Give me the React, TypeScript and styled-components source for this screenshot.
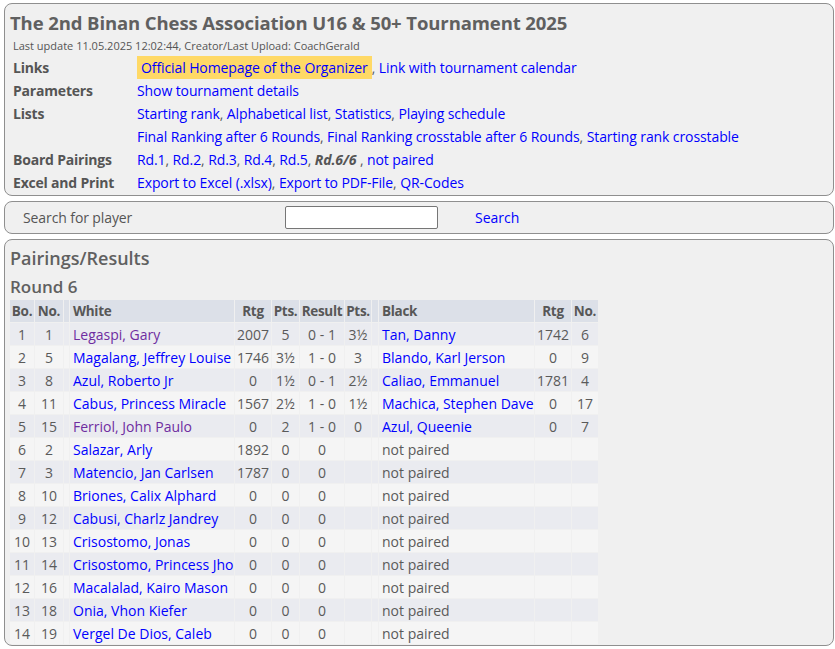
import styled, { createGlobalStyle } from "styled-components";

const GlobalStyle = createGlobalStyle`
  body {
    margin: 0;
    background: #fff;
    font-family: "Open Sans", "Liberation Sans", sans-serif;
    font-size: 14px;
    color: #5a5a5a;
  }
  a {
    color: #0000ff;
    text-decoration: none;
  }
`;

const Page = styled.div`
  display: flex;
  flex-direction: column;
  gap: 5px;
  padding: 3px 1px 3px 4px;
`;

const Panel = styled.div`
  background: #f0f0f0;
  border: 1px solid #8f8f8f;
  border-radius: 8px;
  padding: 4px 5px 4px 5px;
`;

const InfoPanel = styled(Panel)`
  padding: 5px 5px 1px 5px;
`;

const ResultsPanel = styled(Panel)`
  padding: 4px 5px 0 5px;
`;

const Title = styled.h1`
  margin: 0;
  font-size: 18.5px;
  font-weight: 700;
  color: #606060;
  line-height: 27px;
  letter-spacing: -0.1px;
`;

const Updated = styled.div`
  font-size: 11px;
  line-height: 14px;
  margin: 3px 0 3px 3px;
  color: #555;
`;

const InfoGrid = styled.div`
  display: grid;
  grid-template-columns: 124px auto;
  grid-auto-rows: 23px;
  align-items: center;
  padding-left: 3px;
`;

const Label = styled.div`
  font-weight: 700;
  color: #555;
  letter-spacing: -0.2px;
`;

const Value = styled.div`
  white-space: nowrap;
  letter-spacing: -0.1px;
`;

const Highlight = styled.a`
  display: inline-block;
  background: #ffd966;
  padding: 0 4px;
  line-height: 23px;
`;

const Current = styled.b`
  font-style: italic;
  color: #555;
`;

const SearchPanel = styled(Panel)`
  display: grid;
  grid-template-columns: 262px 153px auto;
  align-items: center;
  padding: 3px 5px 4px 18px;
  height: 24px;
`;

const SearchLabel = styled.span`
  color: #555;
  letter-spacing: -0.1px;
`;

const SearchInput = styled.input`
  height: 23px;
  box-sizing: border-box;
  border: 1px solid #767676;
  border-radius: 2px;
  background: #fff;
  margin: 0;
`;

const SearchLink = styled.a`
  margin-left: 37px;
`;

const Heading = styled.h2`
  margin: 0;
  font-size: 18px;
  font-weight: 600;
  color: #606060;
  line-height: 28px;
`;

const SubHeading = styled.h3`
  margin: 2px 0 0 0;
  font-size: 17px;
  font-weight: 600;
  color: #606060;
  line-height: 25px;
`;

const Table = styled.table`
  border-collapse: separate;
  border-spacing: 1px;
  margin-left: -1px;
  width: 590px;
  table-layout: fixed;
  white-space: nowrap;
`;

const Th = styled.th<{ $w: number; $left?: boolean }>`
  width: ${(p) => p.$w}px;
  background: #dce0e8;
  color: #575757;
  font-weight: 700;
  font-size: 13.5px;
  letter-spacing: -0.3px;
  text-align: ${(p) => (p.$left ? "left" : "center")};
  padding: 0 0 0 ${(p) => (p.$left ? 3 : 0)}px;
  height: 22px;
  box-sizing: border-box;
  overflow: hidden;
`;

const Tr = styled.tr<{ $odd: boolean }>`
  background: ${(p) => (p.$odd ? "#eaebf0" : "#f5f5f5")};
`;

const Td = styled.td<{ $left?: boolean }>`
  text-align: ${(p) => (p.$left ? "left" : "center")};
  padding: 0 0 0 ${(p) => (p.$left ? 3 : 0)}px;
  height: 22px;
  color: #5a5a5a;
  overflow: hidden;
`;

const Visited = styled.a`
  color: #6f2da0;
`;

type Row = {
  bo: number;
  no: number;
  white: string;
  visited?: boolean;
  rtg: string;
  pts: string;
  result: string;
  pts2: string;
  black?: string;
  brtg?: string;
  bno?: string;
};

const rows: Row[] = [
  { bo: 1, no: 1, white: "Legaspi, Gary", visited: true, rtg: "2007", pts: "5", result: "0 - 1", pts2: "3½", black: "Tan, Danny", brtg: "1742", bno: "6" },
  { bo: 2, no: 5, white: "Magalang, Jeffrey Louise", rtg: "1746", pts: "3½", result: "1 - 0", pts2: "3", black: "Blando, Karl Jerson", brtg: "0", bno: "9" },
  { bo: 3, no: 8, white: "Azul, Roberto Jr", rtg: "0", pts: "1½", result: "0 - 1", pts2: "2½", black: "Caliao, Emmanuel", brtg: "1781", bno: "4" },
  { bo: 4, no: 11, white: "Cabus, Princess Miracle", rtg: "1567", pts: "2½", result: "1 - 0", pts2: "1½", black: "Machica, Stephen Dave", brtg: "0", bno: "17" },
  { bo: 5, no: 15, white: "Ferriol, John Paulo", visited: true, rtg: "0", pts: "2", result: "1 - 0", pts2: "0", black: "Azul, Queenie", brtg: "0", bno: "7" },
  { bo: 6, no: 2, white: "Salazar, Arly", rtg: "1892", pts: "0", result: "0", pts2: "" },
  { bo: 7, no: 3, white: "Matencio, Jan Carlsen", rtg: "1787", pts: "0", result: "0", pts2: "" },
  { bo: 8, no: 10, white: "Briones, Calix Alphard", rtg: "0", pts: "0", result: "0", pts2: "" },
  { bo: 9, no: 12, white: "Cabusi, Charlz Jandrey", rtg: "0", pts: "0", result: "0", pts2: "" },
  { bo: 10, no: 13, white: "Crisostomo, Jonas", rtg: "0", pts: "0", result: "0", pts2: "" },
  { bo: 11, no: 14, white: "Crisostomo, Princess Jho", rtg: "0", pts: "0", result: "0", pts2: "" },
  { bo: 12, no: 16, white: "Macalalad, Kairo Mason", rtg: "0", pts: "0", result: "0", pts2: "" },
  { bo: 13, no: 18, white: "Onia, Vhon Kiefer", rtg: "0", pts: "0", result: "0", pts2: "" },
  { bo: 14, no: 19, white: "Vergel De Dios, Caleb", rtg: "0", pts: "0", result: "0", pts2: "" },
];

const App = (): JSX.Element => {
  return (
    <>
      <GlobalStyle />
      <Page>
        <InfoPanel>
          <Title>The 2nd Binan Chess Association U16 &amp; 50+ Tournament 2025</Title>
          <Updated>Last update 11.05.2025 12:02:44, Creator/Last Upload: CoachGerald</Updated>
          <InfoGrid>
            <Label>Links</Label>
            <Value>
              <Highlight href="#">Official Homepage of the Organizer</Highlight>,{" "}
              <a href="#">Link with tournament calendar</a>
            </Value>
            <Label>Parameters</Label>
            <Value>
              <a href="#">Show tournament details</a>
            </Value>
            <Label>Lists</Label>
            <Value>
              <a href="#">Starting rank</a>, <a href="#">Alphabetical list</a>, <a href="#">Statistics</a>,{" "}
              <a href="#">Playing schedule</a>
            </Value>
            <div />
            <Value>
              <a href="#">Final Ranking after 6 Rounds</a>, <a href="#">Final Ranking crosstable after 6 Rounds</a>,{" "}
              <a href="#">Starting rank crosstable</a>
            </Value>
            <Label>Board Pairings</Label>
            <Value>
              <a href="#">Rd.1</a>, <a href="#">Rd.2</a>, <a href="#">Rd.3</a>, <a href="#">Rd.4</a>,{" "}
              <a href="#">Rd.5</a>, <Current>Rd.6/6</Current> , <a href="#">not paired</a>
            </Value>
            <Label>Excel and Print</Label>
            <Value>
              <a href="#">Export to Excel (.xlsx)</a>, <a href="#">Export to PDF-File</a>, <a href="#">QR-Codes</a>
            </Value>
          </InfoGrid>
        </InfoPanel>

        <SearchPanel>
          <SearchLabel>Search for player</SearchLabel>
          <SearchInput type="text" />
          <SearchLink href="#">Search</SearchLink>
        </SearchPanel>

        <ResultsPanel>
          <Heading>Pairings/Results</Heading>
          <SubHeading>Round 6</SubHeading>
          <Table>
            <thead>
              <tr>
                <Th $w={24}>Bo.</Th>
                <Th $w={28}>No.</Th>
                <Th $w={5} />
                <Th $w={164} $left>White</Th>
                <Th $w={36}>Rtg</Th>
                <Th $w={27}>Pts.</Th>
                <Th $w={44}>Result</Th>
                <Th $w={26}>Pts.</Th>
                <Th $w={6} />
                <Th $w={155} $left>Black</Th>
                <Th $w={36}>Rtg</Th>
                <Th $w={26}>No.</Th>
              </tr>
            </thead>
            <tbody>
              {rows.map((r, i) => (
                <Tr key={r.bo} $odd={i % 2 === 0}>
                  <Td>{r.bo}</Td>
                  <Td>{r.no}</Td>
                  <Td />
                  <Td $left>
                    {r.visited ? <Visited href="#">{r.white}</Visited> : <a href="#">{r.white}</a>}
                  </Td>
                  <Td>{r.rtg}</Td>
                  <Td>{r.pts}</Td>
                  <Td>{r.result}</Td>
                  <Td>{r.pts2}</Td>
                  <Td />
                  <Td $left>{r.black ? <a href="#">{r.black}</a> : "not paired"}</Td>
                  <Td>{r.brtg ?? ""}</Td>
                  <Td>{r.bno ?? ""}</Td>
                </Tr>
              ))}
            </tbody>
          </Table>
        </ResultsPanel>
      </Page>
    </>
  );
};

export default App;
